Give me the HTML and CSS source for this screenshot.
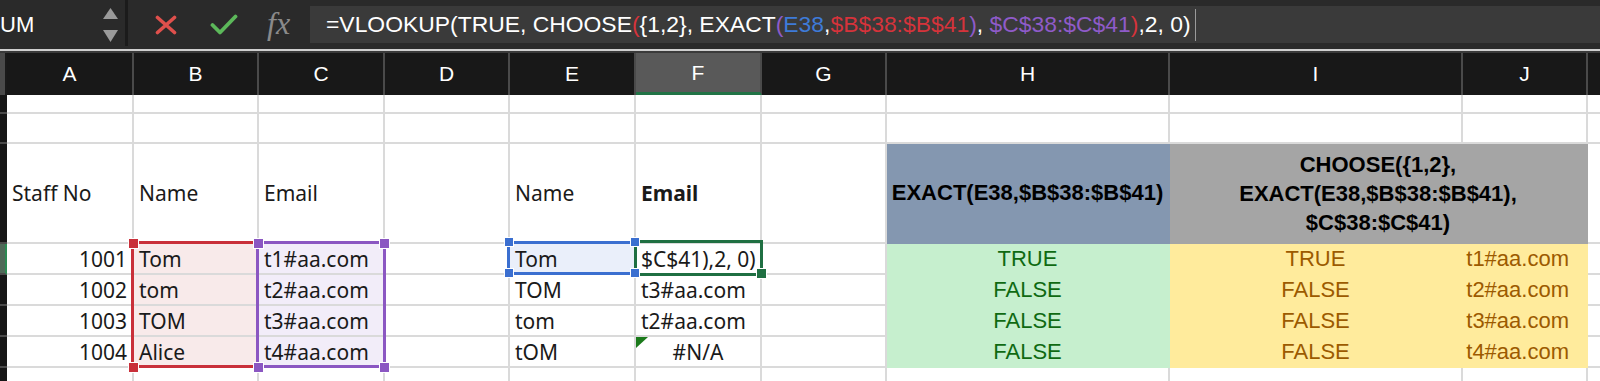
FILE: index.html
```html
<!DOCTYPE html>
<html>
<head>
<meta charset="utf-8">
<link rel="stylesheet" href="styles.css">
</head>
<body>
<div class="app">
  <div class="toolbar">
    <div class="namebox">
      <span class="name">UM</span>
      <svg class="spin" width="15" height="34" viewBox="0 0 15 34"><polygon points="0,11 7.5,0 15,11" fill="#9a9a9a"/><polygon points="0,22 15,22 7.5,34" fill="#9a9a9a"/></svg>
    </div>
    <div class="divider"></div>
    <svg class="ic-x" width="22" height="20" viewBox="0 0 22 20"><path d="M2.5 2.5 L19.5 17.5 M19.5 2.5 L2.5 17.5" stroke="#e0504c" stroke-width="3.6" stroke-linecap="round"/></svg>
    <svg class="ic-ok" width="28" height="21" viewBox="0 0 28 21"><path d="M2.5 11 L10 18.5 L25.5 2.5" stroke="#5cb85a" stroke-width="3.8" stroke-linecap="round" stroke-linejoin="round" fill="none"/></svg>
    <span class="fx">fx</span>
    <div class="formula"><span class="ftext">=VLOOKUP(TRUE, CHOOSE<span class="fr">(</span>{1,2}, EXACT<span class="fp">(</span><span class="fb">E38</span>,<span class="fr">$B$38:$B$41</span><span class="fp">)</span>, <span class="fp">$C$38:$C$41</span><span class="fr">)</span>,2, 0)</span><span class="caret"></span></div>
  </div>
  <div class="rule"></div>
  <div class="sheet">
    <!-- header -->
    <div class="corner"></div>
    <div class="h">A</div><div class="h">B</div><div class="h">C</div><div class="h">D</div><div class="h">E</div><div class="h hsel">F</div><div class="h">G</div><div class="h">H</div><div class="h">I</div><div class="h">J</div><div class="h"></div>
    <!-- row 1 -->
    <div class="rh"></div>
    <div class="c"></div><div class="c"></div><div class="c"></div><div class="c"></div><div class="c"></div><div class="c"></div><div class="c"></div><div class="c"></div><div class="c"></div><div class="c"></div><div class="c"></div>
    <!-- row 2 -->
    <div class="rh"></div>
    <div class="c"></div><div class="c"></div><div class="c"></div><div class="c"></div><div class="c"></div><div class="c"></div><div class="c"></div><div class="c"></div><div class="c"></div><div class="c"></div><div class="c"></div>
    <!-- row 3 -->
    <div class="rh"></div>
    <div class="c">Staff No</div><div class="c">Name</div><div class="c">Email</div><div class="c"></div><div class="c">Name</div><div class="c bold">Email</div><div class="c"></div>
    <div class="c x hdr-blue ctr">EXACT(E38,$B$38:$B$41)</div>
    <div class="c x hdr-grey ctr span2"><span class="multi">CHOOSE({1,2},<br>EXACT(E38,$B$38:$B$41),<br>$C$38:$C$41)</span></div>
    <div class="c"></div>
    <!-- row 4 -->
    <div class="rh act"></div>
    <div class="c r">1001</div><div class="c pink">Tom</div><div class="c lilac">t1#aa.com</div><div class="c"></div><div class="c blue">Tom</div><div class="c">$C$41),2, 0)</div><div class="c"></div>
    <div class="c x good ctr">TRUE</div><div class="c x neutral ctr">TRUE</div><div class="c x neutral r pr">t1#aa.com</div><div class="c"></div>
    <!-- row 5 -->
    <div class="rh"></div>
    <div class="c r">1002</div><div class="c pink">tom</div><div class="c lilac">t2#aa.com</div><div class="c"></div><div class="c">TOM</div><div class="c">t3#aa.com</div><div class="c"></div>
    <div class="c x good ctr">FALSE</div><div class="c x neutral ctr">FALSE</div><div class="c x neutral r pr">t2#aa.com</div><div class="c"></div>
    <!-- row 6 -->
    <div class="rh"></div>
    <div class="c r">1003</div><div class="c pink">TOM</div><div class="c lilac">t3#aa.com</div><div class="c"></div><div class="c">tom</div><div class="c">t2#aa.com</div><div class="c"></div>
    <div class="c x good ctr">FALSE</div><div class="c x neutral ctr">FALSE</div><div class="c x neutral r pr">t3#aa.com</div><div class="c"></div>
    <!-- row 7 -->
    <div class="rh"></div>
    <div class="c r">1004</div><div class="c pink">Alice</div><div class="c lilac">t4#aa.com</div><div class="c"></div><div class="c">tOM</div><div class="c ctr err">#N/A</div><div class="c"></div>
    <div class="c x good ctr">FALSE</div><div class="c x neutral ctr">FALSE</div><div class="c x neutral r pr">t4#aa.com</div><div class="c"></div>
    <!-- row 8 -->
    <div class="rh"></div>
    <div class="c"></div><div class="c"></div><div class="c"></div><div class="c"></div><div class="c"></div><div class="c"></div><div class="c"></div><div class="c"></div><div class="c"></div><div class="c"></div><div class="c"></div>
  </div>

  <div class="box box-red"></div>
  <div class="box box-purple"></div>
  <div class="box box-blue"></div>
  <div class="box box-green"></div>

  <div class="hd hd-red" style="left:128px;top:238px"></div>
  <div class="hd hd-red" style="left:128px;top:362px"></div>
  <div class="hd hd-purple" style="left:253px;top:238px"></div>
  <div class="hd hd-purple" style="left:379px;top:238px"></div>
  <div class="hd hd-purple" style="left:253px;top:362px"></div>
  <div class="hd hd-purple" style="left:379px;top:362px"></div>
  <div class="hd hd-blue" style="left:504px;top:237px"></div>
  <div class="hd hd-blue" style="left:630px;top:237px"></div>
  <div class="hd hd-blue" style="left:504px;top:268px"></div>
  <div class="hd hd-blue" style="left:630px;top:268px"></div>
  <div class="hd hd-green" style="left:756px;top:268px"></div>
</div>
</body>
</html>
```
FILE: styles.css
```css
html, body {
  margin: 0;
  padding: 0;
  background: #ffffff;
  overflow: hidden;
}

.app {
  position: relative;
  width: 1600px;
  height: 381px;
  overflow: hidden;
  font-family: "Noto Sans", sans-serif;
}

/* ---------- formula bar ---------- */
.toolbar {
  display: flex;
  align-items: center;
  height: 49px;
  background: #2a2a2a;
}

.namebox {
  width: 125px;
  height: 49px;
  box-sizing: border-box;
  padding-right: 7px;
  display: flex;
  align-items: center;
  justify-content: space-between;
}

.name {
  color: #ffffff;
  font: 22px "Liberation Sans", sans-serif;
  margin-left: 0;
}

.divider {
  width: 3px;
  height: 46px;
  align-self: flex-start;
  background: #1b1b1b;
}

.ic-x {
  margin-left: 27px;
}

.ic-ok {
  margin-left: 33px;
}

.fx {
  margin-left: 29px;
  width: 32px;
  color: #8a8a8a;
  font: italic 32px "Liberation Serif", serif;
  line-height: 1;
  margin-top: -4px;
}

.formula {
  flex: 1;
  align-self: flex-start;
  margin-left: 11px;
  margin-top: 6px;
  height: 37px;
  background: #3a3a3a;
  padding-left: 16px;
  display: flex;
  align-items: center;
  white-space: nowrap;
  color: #ffffff;
  font: 22.9px "Liberation Sans", sans-serif;
}

.fr { color: #d6333b; }
.fp { color: #8f5bc9; }
.fb { color: #3e7bd8; }

.caret {
  display: inline-block;
  width: 1px;
  height: 32px;
  margin-left: 4px;
  background: #9a9a9a;
}

.rule {
  height: 4px;
  box-sizing: border-box;
  border-top: 2px solid #cfcfcf;
  background: #3a3a3a;
}

/* ---------- sheet grid ---------- */
.sheet {
  display: grid;
  grid-template-columns: 7px 127px 125px 126px 125px 126px 126px 125px 283px 293px 125px 40px;
  grid-template-rows: 42px 19px 30px 100px 31px 31px 31px 31px 40px;
}

.corner {
  background: #4a4a4a;
  border-right: 2px solid #1a1a1a;
  box-sizing: border-box;
}

.h {
  background: #181818;
  color: #ffffff;
  border-right: 2px solid #4a4a4a;
  box-sizing: border-box;
  display: flex;
  align-items: center;
  justify-content: center;
  font: 21px "Liberation Sans", sans-serif;
}

.h.hsel {
  background: #595959;
  border-bottom: 3px solid #217346;
}

.rh {
  background: #161616;
  border-bottom: 2px solid #4a4a4a;
  box-sizing: border-box;
}

.rh.act {
  background: #4f6a58;
  border-right: 2px solid #2b8a52;
}

.c {
  position: relative;
  box-sizing: border-box;
  border-right: 2px solid #dadada;
  border-bottom: 2px solid #dadada;
  display: flex;
  align-items: center;
  padding: 0 5px;
  font-size: 21px;
  color: #1a1a1a;
  white-space: nowrap;
  overflow: hidden;
}

.c.r { justify-content: flex-end; }
.c.ctr { justify-content: center; }
.c.bold { font-weight: 700; }

.c.pink { background: #f8eaea; }
.c.lilac { background: #f2edf9; }
.c.blue { background: #eaeffa; }

.c.x {
  font: 22px "Liberation Sans", sans-serif;
  border-color: transparent;
}

.c.pr { padding-right: 17px; }

.span2 { grid-column: span 2; }

.hdr-blue {
  background: #8497b0;
  color: #000000;
  font-weight: 700 !important;
}

.hdr-grey {
  background: #a5a5a5;
  color: #000000;
  font-weight: 700 !important;
}

.multi {
  display: block;
  text-align: center;
  line-height: 29px;
}

.good {
  background: #c6efce;
  color: #0f6a12 !important;
}

.neutral {
  background: #ffeb9c;
  color: #9c5a00 !important;
}

.err::before {
  content: "";
  position: absolute;
  left: 0;
  top: 0;
  border-top: 11px solid #1b7a1b;
  border-right: 12px solid transparent;
}

/* ---------- selection overlays ---------- */
.box {
  position: absolute;
  box-sizing: border-box;
}

.box-red {
  left: 131px;
  top: 241px;
  width: 128px;
  height: 127px;
  border: 3px solid #c9303a;
}

.box-purple {
  left: 256px;
  top: 241px;
  width: 130px;
  height: 127px;
  border: 3px solid #8b57c2;
}

.box-blue {
  left: 507px;
  top: 241px;
  width: 130px;
  height: 34px;
  border: 3px solid #3b6fd0;
}

.box-green {
  left: 634px;
  top: 240px;
  width: 129px;
  height: 36px;
  border: 3px solid #1f6f42;
}

.hd {
  position: absolute;
  width: 11px;
  height: 11px;
  box-sizing: border-box;
  border: 1px solid #ffffff;
}

.hd-red { background: #c9303a; }
.hd-purple { background: #8b57c2; }
.hd-blue { background: #3b6fd0; width: 10px; height: 10px; }
.hd-green { background: #1f6f42; }
```
